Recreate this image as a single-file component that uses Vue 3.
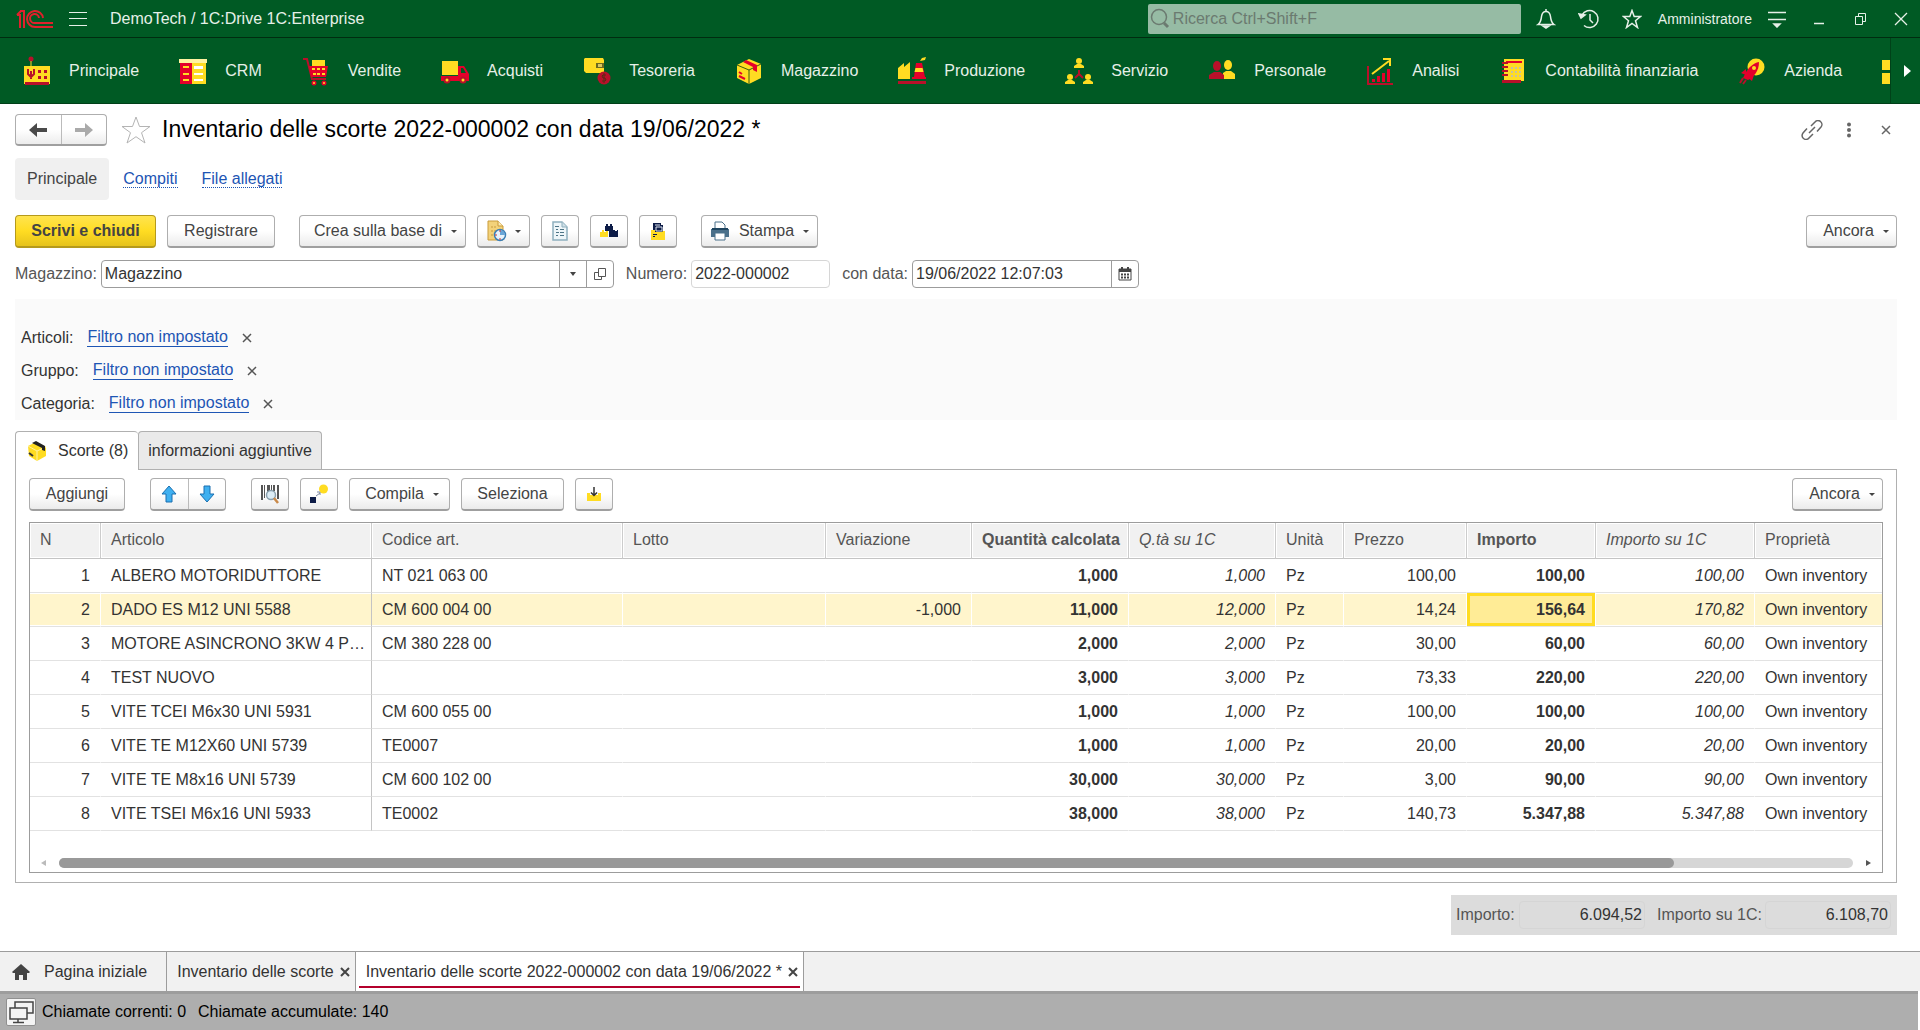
<script setup>
import { ref } from 'vue'

const Y = '#ffdc22'
const R = '#e4002b'
const D = '#b8102a'

const sections = [
  { label: 'Principale', icon: `<path d="M3 11h26v18H3z" fill="${Y}"/><path d="M4 27h24v3H4z" fill="${D}"/><circle cx="10" cy="4" r="2.500" fill="${D}"/><path d="M9.500 6h1v6h-1z" fill="${Y}"/><path d="M7 14v5l3 3 3-3v-5M10 16v8" stroke="${D}" stroke-width="2" fill="none"/><path d="M17 15h3v3h-3zM23 15h3v3h-3zM17 21h3v3h-3zM23 21h3v3h-3z" fill="${D}"/>` },
  { label: 'CRM', icon: `<path d="M2 4h28v4H2z" fill="#fff3a0"/><path d="M3 8h26v21H3z" fill="${Y}"/><path d="M3 8h12v21H3z" fill="${R}"/><path d="M6 11h6v2H6zM6 18h6v2H6zM6 24h6v2H6z" fill="${Y}"/><path d="M17 11h9v3h-9zM17 18h9v2h-9zM17 24h9v2h-9z" fill="#fff"/>` },
  { label: 'Vendite', icon: `<path d="M12 5h13v8H12z" fill="${Y}"/><path d="M3 4h4l5 20h14" stroke="${D}" stroke-width="2" fill="none"/><path d="M9 11h19l-2 11H11z" fill="${R}"/><path d="M12 13h3v2h-3zM17 13h3v2h-3zM22 13h3v2h-3zM13 18h3v2h-3zM17 18h3v2h-3zM22 18h3v2h-3z" fill="${Y}"/><circle cx="14" cy="28" r="2.500" fill="${R}"/><circle cx="24" cy="28" r="2.500" fill="${R}"/><circle cx="14" cy="28" r="1" fill="${Y}"/><circle cx="24" cy="28" r="1" fill="${Y}"/>` },
  { label: 'Acquisti', icon: `<path d="M3 6h16v14H3z" fill="${Y}"/><path d="M19 11h6l5 8v7H2v-5h17z" fill="${R}"/><path d="M22 13h2l3 5h-5z" fill="#005a24"/><circle cx="8" cy="25" r="3.500" fill="${D}"/><circle cx="24" cy="25" r="3.500" fill="${D}"/><circle cx="8" cy="25" r="1.500" fill="${Y}"/><circle cx="24" cy="25" r="1.500" fill="${Y}"/>` },
  { label: 'Tesoreria', icon: `<path d="M4 3h18l1 2v13H5l-2-2V4z" fill="${Y}"/><path d="M15 8h8v5h-8z" fill="#6b6a20"/><path d="M17 9h4v3h-4z" fill="#d8c860"/><circle cx="23" cy="23" r="6.500" fill="${D}"/><path d="M25 20h-3l-1 1 1 2h2l1 2-1 1h-3M23 18v10" stroke="#5a2a14" fill="none"/>` },
  { label: 'Magazzino', icon: `<path d="m4 10 12-6 12 5v14l-12 6-12-6z" fill="${Y}"/><path d="m4 10 12 5 12-6M16 15v14" stroke="#3b5a10" fill="none"/><path d="m10 7 3-2 11 5v7l-4-2v-3z" fill="${R}"/><path d="m6 17 3 2M6 21l6 3" stroke="${R}" stroke-width="2"/>` },
  { label: 'Produzione', icon: `<path d="M2 24V13l6-5v4l6-5v17z" fill="${Y}"/><path d="M2 26h28v3H2z" fill="${D}"/><path d="M20 8h6l3 14h1v2H16v-2h2z" fill="${R}"/><path d="M19.500 13h7l1 4h-9z" fill="${Y}"/><path d="m24 6 2-3 4-1-1 3z" fill="${Y}"/>` },
  { label: 'Servizio', icon: `<g fill="${Y}"><circle cx="16" cy="6" r="3"/><path d="M11 13v-2l3-2h4l3 2v2z"/><circle cx="7" cy="22" r="3"/><path d="M2 29v-2l3-2h4l3 2v2z"/><circle cx="25" cy="22" r="3"/><path d="M20 29v-2l3-2h4l3 2v2z"/></g><path d="M16 15v4l-4 4M16 19l4 4" stroke="${D}" stroke-width="2" fill="none"/>` },
  { label: 'Personale', icon: `<ellipse cx="22" cy="10" rx="4" ry="5" fill="${Y}"/><path d="M17 24v-6l3-2h5l4 3v5z" fill="${Y}"/><ellipse cx="11" cy="11" rx="4" ry="5" fill="${D}"/><path d="M3 24v-4l5-3h6l4 3v4z" fill="${D}"/>` },
  { label: 'Analisi', icon: `<path d="M4 11v18h25" stroke="${D}" stroke-width="2" fill="none"/><path d="M8 24h3v3H8zM13 21h3v6h-3zM18 18h3v9h-3zM23 14h3v13h-3z" fill="${R}"/><path d="M8 19 25 6M19 4h7v7" stroke="${Y}" stroke-width="2" fill="none"/>` },
  { label: 'Contabilità finanziaria', icon: `<path d="M7 4h20v22H7z" fill="${Y}"/><path d="M9 6h16v2H9z" fill="${R}"/><path d="M5 7h6v2H5zM5 11h6v2H5zM5 15h6v2H5zM5 19h6v2H5zM5 25h19v3H5z" fill="${D}"/><path d="M14 13h10M14 17h10M14 21h10" stroke="#c8c0a0" stroke-width="2" stroke-dasharray="2 2"/>` },
  { label: 'Azienda', icon: `<circle cx="20" cy="12" r="8.500" fill="${Y}"/><path d="M23 7c-6 1-11 6-14 12l-2 4 5 2c6-3 11-9 11-18z" fill="${R}"/><path d="m10 14-5 4 5 2zM18 20l-2 6-4-3z" fill="${R}"/><circle cx="18" cy="13" r="2" fill="${Y}"/><path d="m7 23-3 5M10 25l-3 4" stroke="${D}" stroke-width="2"/>` },
]

const warehouse = ref('Magazzino')
const number = ref('2022-000002')
const date = ref('19/06/2022 12:07:03')
const total = ref('6.094,52')
const total1c = ref('6.108,70')
const filters = ['Articoli:', 'Gruppo:', 'Categoria:']

const columns = [
  { key: 'n', title: 'N', cls: 'num' },
  { key: 'item', title: 'Articolo', cls: 'frozen' },
  { key: 'code', title: 'Codice art.', cls: '' },
  { key: 'lot', title: 'Lotto', cls: '' },
  { key: 'diff', title: 'Variazione', cls: 'num' },
  { key: 'qty', title: 'Quantità calcolata', cls: 'num strong' },
  { key: 'qty1c', title: 'Q.tà su 1C', cls: 'num slanted' },
  { key: 'unit', title: 'Unità', cls: '' },
  { key: 'price', title: 'Prezzo', cls: 'num' },
  { key: 'sum', title: 'Importo', cls: 'num strong' },
  { key: 'sum1c', title: 'Importo su 1C', cls: 'num slanted' },
  { key: 'owner', title: 'Proprietà', cls: '' },
]
const make = (n, item, code, diff, qty, qty1c, price, sum, sum1c) =>
  ({ n, item, code, lot: '', diff, qty, qty1c, unit: 'Pz', price, sum, sum1c, owner: 'Own inventory' })
const rows = [
  make(1, 'ALBERO MOTORIDUTTORE', 'NT 021 063 00', '', '1,000', '1,000', '100,00', '100,00', '100,00'),
  make(2, 'DADO ES M12 UNI 5588', 'CM 600 004 00', '-1,000', '11,000', '12,000', '14,24', '156,64', '170,82'),
  make(3, 'MOTORE ASINCRONO 3KW 4 P…', 'CM 380 228 00', '', '2,000', '2,000', '30,00', '60,00', '60,00'),
  make(4, 'TEST NUOVO', '', '', '3,000', '3,000', '73,33', '220,00', '220,00'),
  make(5, 'VITE TCEI M6x30 UNI 5931', 'CM 600 055 00', '', '1,000', '1,000', '100,00', '100,00', '100,00'),
  make(6, 'VITE TE M12X60 UNI 5739', 'TE0007', '', '1,000', '1,000', '20,00', '20,00', '20,00'),
  make(7, 'VITE TE M8x16 UNI 5739', 'CM 600 102 00', '', '30,000', '30,000', '3,00', '90,00', '90,00'),
  make(8, 'VITE TSEI M6x16 UNI 5933', 'TE0002', '', '38,000', '38,000', '140,73', '5.347,88', '5.347,88'),
]
const selected = 2
</script>

<template>
  <div class="app">
    <header class="titlebar">
      <svg class="logo" width="38" height="20" viewBox="0 0 38 20" fill="none" stroke="#e0202c" stroke-width="2">
        <path d="M1 6h3v13M4 2h4v17M1 6l4-4" />
        <path d="M27 9a8 8 0 1 0-8 9h18M23 9a4.500 4.500 0 1 0-4 5h18" />
      </svg>
      <button class="bare menu" aria-label="Menu">
        <svg width="18" height="16" viewBox="0 0 18 16" stroke="#e6f0e8" stroke-width="1"><path d="M0 1.500h18M0 7.500h18M0 14.500h18" /></svg>
      </button>
      <span class="product">DemoTech / 1C:Drive 1C:Enterprise</span>
      <div class="search">
        <svg width="22" height="22" viewBox="0 0 22 22" fill="none" stroke="#6b7a70" stroke-width="2"><circle cx="10" cy="9" r="7.500" stroke-width="1.500" /><path d="m15 15 4 4" stroke-width="3" /></svg>
        <input type="text" placeholder="Ricerca Ctrl+Shift+F" aria-label="Ricerca" />
      </div>
      <div class="tools">
        <button class="bare" aria-label="Notifiche">
          <svg width="20" height="20" viewBox="0 0 20 20" fill="none" stroke="#e6f0e8" stroke-width="1.500"><path d="M2 15.500h16c-3-2-3-4-3.500-8C14 4 12 2.500 10 2.500S6 4 5.500 7.500C5 11.500 5 13.500 2 15.500z" /><path d="M10 0v3" /><path d="M7 17h6l-3 2z" fill="#e6f0e8" /></svg>
        </button>
        <button class="bare" aria-label="Cronologia">
          <svg width="22" height="20" viewBox="0 0 22 20" fill="none" stroke="#e6f0e8" stroke-width="1.500"><path d="M4 6a8.500 8.500 0 1 1 2 10.500M12 5v6l3 3" /><path d="m1 5 2 4 4-3z" fill="#e6f0e8" /></svg>
        </button>
        <button class="bare" aria-label="Preferiti">
          <svg width="20" height="20" viewBox="0 0 20 20" fill="none" stroke="#e6f0e8" stroke-width="1.500"><path d="m10 1.500 2.200 6H18.500l-5 4.200 2 6.800-5.500-4-5.500 4 2-6.800-5-4.200h6.300z" /></svg>
        </button>
        <span class="user">Amministratore</span>
        <button class="bare" aria-label="Opzioni">
          <svg width="18" height="18" viewBox="0 0 18 18" stroke="#e6f0e8" stroke-width="1.500"><path d="M0 2.500h18M0 9.500h18" /><path d="M6 14h6l-3 3z" fill="#e6f0e8" /></svg>
        </button>
        <div class="frame">
          <button class="bare" aria-label="Riduci"><svg width="12" height="12" viewBox="0 0 12 12" stroke="#e6f0e8" stroke-width="1.500"><path d="M1 10.500h10" /></svg></button>
          <button class="bare" aria-label="Ripristina"><svg width="12" height="12" viewBox="0 0 12 12" fill="none" stroke="#e6f0e8"><path d="M1.500 3.500h7v8h-7zM4.500 3.500v-3h7v8h-3" /></svg></button>
          <button class="bare" aria-label="Chiudi"><svg width="14" height="14" viewBox="0 0 14 14" stroke="#e6f0e8" stroke-width="1.300"><path d="m1 1 12 12M13 1 1 13" /></svg></button>
        </div>
      </div>
    </header>

    <nav class="sections">
      <div class="strip">
        <a v-for="s in sections" :key="s.label" href="#" class="section">
          <svg width="32" height="32" viewBox="0 0 32 32" v-html="s.icon" />
          <span>{{ s.label }}</span>
        </a>
        <a href="#" class="section more" aria-label="Altro">
          <svg width="16" height="32" viewBox="0 0 16 32"><path d="M2 5h14v10H2zM2 18h14v11H2z" fill="#ffdc22" /></svg>
        </a>
      </div>
      <button class="bare scroller" aria-label="Avanti"><svg width="8" height="12" viewBox="0 0 8 12"><path d="M1 0v12l7-6z" fill="#fff" /></svg></button>
    </nav>

    <main class="page">
      <div class="heading">
        <div class="pair history">
          <button aria-label="Indietro"><svg width="18" height="14" viewBox="0 0 18 14"><path d="M8 0v5h10v4H8v5L0 7z" fill="#4a4a4a" /></svg></button>
          <button aria-label="Inoltra"><svg width="18" height="14" viewBox="0 0 18 14"><path d="M10 0v5H0v4h10v5l8-7z" fill="#aaa" /></svg></button>
        </div>
        <svg class="star" width="30" height="28" viewBox="0 0 30 28" fill="none" stroke="#b4b4b4"><path d="m15 1 3.500 9.500H29l-8.500 6.200L24 27l-9-6.300L6 27l3.500-10.300L1 10.500h10.500z" /></svg>
        <h1>Inventario delle scorte 2022-000002 con data 19/06/2022 *</h1>
        <div class="page-tools">
          <button class="bare" aria-label="Collegamento"><svg width="22" height="20" viewBox="0 0 22 20" fill="none" stroke="#666" stroke-width="1.500"><path d="m8 13 6-6M10 6l4-4a3.800 3.800 0 0 1 6 5l-4 4.500M12 14l-4 4a3.800 3.800 0 0 1-6-5l4-4.500" /></svg></button>
          <button class="bare" aria-label="Altro"><svg width="6" height="16" viewBox="0 0 6 16" fill="#666"><circle cx="3" cy="2.500" r="2" /><circle cx="3" cy="8" r="2" /><circle cx="3" cy="13.500" r="2" /></svg></button>
          <button class="bare close" aria-label="Chiudi"><svg width="10" height="10" viewBox="0 0 10 10" stroke="#666" stroke-width="1.500"><path d="m1 1 8 8M9 1 1 9" /></svg></button>
        </div>
      </div>

      <nav class="subnav">
        <a href="#" class="current">Principale</a>
        <a href="#"><span>Compiti</span></a>
        <a href="#"><span>File allegati</span></a>
      </nav>

      <div class="toolbar">
        <button class="btn primary">Scrivi e chiudi</button>
        <button class="btn save">Registrare</button>
        <button class="btn create">Crea sulla base di <i class="caret" /></button>
        <button class="btn sheet" aria-label="Rapporti">
          <svg width="22" height="22" viewBox="0 0 22 22"><path d="M2 1h10l5 5v14H2z" fill="#f3d27a" stroke="#c99b3a" /><path d="M12 1v5h5" fill="#fbe9b5" stroke="#c99b3a" /><path d="M5 7h5M5 11h6M5 15h4" stroke="#c99b3a" stroke-dasharray="2 1" /><circle cx="14" cy="15" r="5.500" fill="#e8f3fb" stroke="#3d7fb5" stroke-width="1.500" /><path d="M14 15v-5a5 5 0 0 1 5 5z" fill="#6aa6d8" /><path d="M14 10v2M9 15h2M14 18v2" stroke="#c33" /></svg>
          <i class="caret" />
        </button>
        <button class="btn square" aria-label="Documento"><svg width="18" height="20" viewBox="0 0 18 20"><path d="M2 1h9l5 5v13H2z" fill="#eef6f9" stroke="#8fb0be" stroke-width="1.500" /><path d="M11 1v5h5" fill="#cfe0e8" stroke="#8fb0be" /><path d="M4 5.500h4M5 8.500h2M9 8.500h4M5 11.500h3M9 11.500h4M5 14.500h2M9 14.500h4" stroke="#4d7486" stroke-width="1" /></svg></button>
        <button class="btn square" aria-label="Moduli"><svg width="20" height="14" viewBox="0 0 20 14"><path d="M1 8h2V6h2v2h2V6h2v7H1z" fill="#ffdc22" /><path d="M6 2h1V0h2v2h2V0h2v2h1v4h2v1h2V6h1v7H10V7H6z" fill="#0d1c47" /></svg></button>
        <button class="btn square" aria-label="Archivio"><svg width="16" height="18" viewBox="0 0 16 18"><path d="M3 1h8v2h2v7H5V8H3z" fill="#0d1c47" /><path d="M5 3h5M6 5h6v4H6z" stroke="#dfe4f0" fill="none" /><path d="M1 8h4v2h7l1-1h2v9H1z" fill="#ffdc22" /><path d="M3 12.500h4M3 14.500h2" stroke="#0d1c47" /></svg></button>
        <button class="btn print">
          <svg width="20" height="20" viewBox="0 0 20 20"><path d="M5 8V1h7l3 3v4" fill="#fff" stroke="#4b708a" /><path d="M1 8h18v8H1z" fill="#4b708a" /><path d="M2 7h16v2H2z" fill="#1f4560" /><path d="M5 12h10v7H5z" fill="#fff" stroke="#4b708a" /></svg>
          Stampa <i class="caret" />
        </button>
        <button class="btn extra">Ancora <i class="caret" /></button>
      </div>

      <div class="fields">
        <label for="warehouse">Magazzino:</label>
        <div class="field wh">
          <input id="warehouse" v-model="warehouse" type="text" />
          <button aria-label="Elenco"><i class="caret" /></button>
          <button aria-label="Apri"><svg width="14" height="14" viewBox="0 0 14 14" fill="none" stroke="#555"><path d="M5.500 1.500h7v8h-7zM5.500 5.500h-4v7h7v-3" /></svg></button>
        </div>
        <label for="number" class="gap">Numero:</label>
        <div class="field nr"><input id="number" v-model="number" type="text" /></div>
        <label for="date" class="gap">con data:</label>
        <div class="field dt">
          <input id="date" v-model="date" type="text" />
          <button aria-label="Calendario"><svg width="14" height="14" viewBox="0 0 14 14"><path d="M1 2h12v11H1z" fill="none" stroke="#444" /><path d="M1 2h12v3H1zM3 0h2v3H3zM9 0h2v3H9z" fill="#444" /><path d="M3 7.500h8M3 10.500h8" stroke="#444" stroke-width="2" stroke-dasharray="2 1" /></svg></button>
        </div>
      </div>

      <section class="filters">
        <div v-for="f in filters" :key="f" class="filter">
          <span>{{ f }}</span>
          <a href="#">Filtro non impostato</a>
          <button class="bare" aria-label="Rimuovi filtro"><svg width="10" height="10" viewBox="0 0 10 10" stroke="#555" stroke-width="1.500"><path d="m1 1 8 8M9 1 1 9" /></svg></button>
        </div>
      </section>

      <div class="tabs">
        <button class="tab on">
          <svg width="22" height="22" viewBox="0 0 22 22"><path d="m2 6 8-4 10 5v9l-9 5-8-5z" fill="#ffdc22" /><path d="m2 6 9 5 9-4M11 11v10" stroke="#fff2a0" fill="none" /><path d="m6 3 4-2 9 5v5l-3-1V8z" fill="#222" /><path d="m3 13 4 3" stroke="#333" stroke-width="2" /></svg>
          Scorte (8)
        </button>
        <button class="tab">informazioni aggiuntive</button>
      </div>

      <section class="panel">
        <div class="toolbar inner">
          <button class="btn add">Aggiungi</button>
          <div class="pair arrows">
            <button aria-label="Su"><svg width="16" height="18" viewBox="0 0 16 18"><path d="m8 1 7 8h-4v8H5V9H1z" fill="#3fb0f0" stroke="#1a6fb0" /></svg></button>
            <button aria-label="Giù"><svg width="16" height="18" viewBox="0 0 16 18"><path d="m8 17 7-8h-4V1H5v8H1z" fill="#3fb0f0" stroke="#1a6fb0" /></svg></button>
          </div>
          <button class="btn square scan" aria-label="Codice a barre"><svg width="20" height="20" viewBox="0 0 20 20"><path d="M1 1h2v15H1zM4 1h1v13H4zM7 1h3v9H7zM11 1h1v5h-1zM13 1h2v6h-2zM17 1h2v14h-2z" fill="#555" /><circle cx="11" cy="11" r="4.500" fill="#dcecf5" stroke="#8aa0ae" stroke-width="1.500" /><path d="m14 14 4 5" stroke="#c98a4a" stroke-width="2.500" /></svg></button>
          <button class="btn square" aria-label="Trasferisci"><svg width="20" height="20" viewBox="0 0 20 20"><circle cx="14.500" cy="5" r="4.500" fill="#ffdc22" /><path d="M1 13h6v6H1z" fill="#0d1c47" /><path d="m7 12 4-3M8 8h3v3" stroke="#7a86a0" fill="none" /></svg></button>
          <button class="btn fill">Compila <i class="caret" /></button>
          <button class="btn pick">Seleziona</button>
          <button class="btn square" aria-label="Carica"><svg width="16" height="14" viewBox="0 0 16 14"><path d="M1 6h3v2h8V6h3v8H1z" fill="#ffdc22" /><path d="M8 0v8M5 5.500 8 8.500l3-3" stroke="#333" stroke-width="1.500" fill="none" /></svg></button>
          <button class="btn extra">Ancora <i class="caret" /></button>
        </div>

        <div class="grid">
          <table>
            <colgroup><col v-for="c in columns" :key="c.key" :class="'c-' + c.key" /></colgroup>
            <thead>
              <tr><th v-for="c in columns" :key="c.key" :class="c.cls">{{ c.title }}</th></tr>
            </thead>
            <tbody>
              <tr v-for="r in rows" :key="r.n" :class="{ sel: r.n === selected }">
                <td v-for="c in columns" :key="c.key" :class="[c.cls, { cur: r.n === selected && c.key === 'sum' }]">{{ r[c.key] }}</td>
              </tr>
            </tbody>
          </table>
          <div class="scroll">
            <svg width="6" height="6" viewBox="0 0 6 6"><path d="M5 0v6L0 3z" fill="#bbb" /></svg>
            <div class="track"><div class="thumb" /></div>
            <svg width="6" height="6" viewBox="0 0 6 6"><path d="M1 0v6l5-3z" fill="#555" /></svg>
          </div>
        </div>
      </section>

      <div class="totals">
        <label for="total">Importo:</label>
        <input id="total" v-model="total" type="text" readonly />
        <label for="total1c">Importo su 1C:</label>
        <input id="total1c" v-model="total1c" type="text" readonly />
      </div>
    </main>

    <footer>
      <div class="windows">
        <button class="wtab home">
          <svg width="18" height="16" viewBox="0 0 18 16"><path d="M9 0 0 8l1 1h2v7h4v-5h4v5h4V9h2l1-1z" fill="#444" /></svg>
          Pagina iniziale
        </button>
        <button class="wtab">Inventario delle scorte
          <svg width="10" height="10" viewBox="0 0 10 10" stroke="#444" stroke-width="2"><path d="m1 1 8 8M9 1 1 9" /></svg>
        </button>
        <button class="wtab on">Inventario delle scorte 2022-000002 con data 19/06/2022 *
          <svg width="10" height="10" viewBox="0 0 10 10" stroke="#444" stroke-width="2"><path d="m1 1 8 8M9 1 1 9" /></svg>
        </button>
      </div>
      <div class="status">
        <button class="mon" aria-label="Prestazioni"><svg width="26" height="24" viewBox="0 0 26 24" fill="#f4f4f4" stroke="#444" stroke-width="1.500"><path d="M7 2h18v11H7z" /><path d="M2 8h17v11H2zM10 19v3M5 22.500h11" /></svg></button>
        <span>Chiamate correnti: 0</span>
        <span>Chiamate accumulate: 140</span>
      </div>
    </footer>
  </div>
</template>

<style>
body { background: #fff; }
</style>

<style scoped>
.app, .app * { box-sizing: border-box; }
.app {
  display: flex;
  flex-direction: column;
  min-height: 100vh;
  font-family: "Liberation Sans", Arial, sans-serif;
  font-size: 16px;
  color: #333;
}
button, input { font: inherit; color: inherit; margin: 0; padding: 0; }
svg { flex: none; display: block; }
.bare { background: none; border: 0; display: flex; align-items: center; justify-content: center; }

.titlebar {
  display: flex;
  align-items: center;
  height: 38px;
  padding: 0 10px 0 16px;
  background: #005a24;
  border-bottom: 1px solid #002c10;
  color: #e6f0e8;
}
.menu { margin-left: 15px; }
.product { margin-left: 23px; }
.search {
  display: flex;
  align-items: center;
  width: 373px;
  height: 30px;
  margin-left: auto;
  padding-left: 1px;
  background: #96bba4;
  border-radius: 2px;
}
.search input { flex: 1; min-width: 0; margin-left: 2px; border: 0; background: none; outline: 0; }
.search input::placeholder { color: #6b7a70; opacity: 1; }
.tools { display: flex; align-items: center; gap: 22px; margin-left: 15px; }
.user { font-size: 14px; margin: 0 -6px; }
.frame { display: flex; gap: 23px; margin-left: 2px; }
.frame .bare { width: 18px; }

.sections {
  display: flex;
  height: 66px;
  background: #005a24;
  border-bottom: 1px solid #003f18;
  color: #e6f0e8;
}
.strip { display: flex; flex: 1; min-width: 0; overflow: hidden; padding-left: 21px; border-right: 1px solid #004219; }
.section { display: flex; flex: none; align-items: center; gap: 16px; margin-right: 38px; color: inherit; text-decoration: none; }
.section.more { margin: 0; }
.scroller { width: 29px; padding-left: 2px; }

.page { flex: 1; padding: 10px 23px 16px 15px; }
.heading { display: flex; align-items: center; height: 32px; }
.pair { display: flex; height: 32px; border: 1px solid #aeaeae; border-bottom: 2px solid #9f9f9f; border-radius: 4px; background: linear-gradient(#fff 50%, #ececec); }
.pair button { flex: 1; display: flex; align-items: center; justify-content: center; border: 0; background: none; }
.pair button + button { border-left: 1px solid #bbb; }
.history { width: 92px; }
.star { margin-left: 14px; }
h1 { margin: 0 0 2px 11px; font-size: 23px; line-height: 28px; font-weight: 400; color: #000; white-space: nowrap; }
.page-tools { display: flex; align-items: center; gap: 23px; margin-left: auto; }
.close { width: 22px; }

.subnav { display: flex; height: 42px; margin-top: 12px; line-height: 42px; }
.subnav a { margin-right: 24px; color: #1d55b4; text-decoration: none; }
.subnav a span { border-bottom: 1px dotted #1d55b4; }
.subnav a.current { margin-right: 14px; padding: 0 12px; border-radius: 4px; background: #f0f0f0; color: #444; }

.toolbar { display: flex; margin-top: 15px; gap: 11px; }
.btn {
  display: flex;
  align-items: center;
  justify-content: center;
  height: 33px;
  border: 1px solid #aeaeae;
  border-bottom: 2px solid #9f9f9f;
  border-radius: 4px;
  background: linear-gradient(#fff 50%, #ebebeb);
  color: #444;
  white-space: nowrap;
}
.caret { flex: none; width: 0; height: 0; border: 3px solid transparent; border-top: 3px solid #444; border-bottom: 0; margin-left: 9px; }
.primary { width: 141px; border-color: #b59a1c; background: linear-gradient(#ffe44f, #ffdc22 50%, #e6c31c); font-weight: 700; }
.save { width: 108px; }
.create { width: 167px; margin-left: 13px; padding-left: 6px; }
.sheet { width: 53px; }
.sheet .caret { margin-left: 7px; }
.square { width: 38px; }
.print { width: 117px; margin-left: 13px; }
.print svg { margin-right: 9px; }
.extra { width: 91px; margin-left: auto; padding-left: 9px; }

.fields { display: flex; align-items: center; margin-top: 12px; height: 28px; color: #555; }
.fields label { margin-right: 4px; }
.fields .gap { margin-left: 12px; }
.field { display: flex; height: 28px; border: 1px solid #9c9c9c; border-radius: 4px; background: #fff; color: #333; }
.field input { flex: 1; min-width: 0; border: 0; padding: 0 3px; background: none; outline: 0; }
.field button { display: flex; align-items: center; justify-content: center; width: 27px; border: 0; border-left: 1px solid #9c9c9c; background: none; }
.field .caret { margin: 0; border-width: 4px 3px 0; }
.wh { width: 513px; }
.nr { width: 139px; border-color: #d6d6d6; }
.dt { width: 227px; }

.filters { margin-top: 11px; padding: 22px 6px 0; background: #fafafa; }
.filter { display: flex; align-items: center; height: 33px; color: #333; }
.filter a { margin: 0 14px 0 14px; line-height: 18px; color: #1d55b4; text-decoration: none; border-bottom: 1px solid #1d55b4; }

.tabs { display: flex; margin-top: 11px; height: 38px; }
.tab { display: flex; align-items: center; padding: 0 9px; border: 1px solid #b0b0b0; border-bottom: 0; border-radius: 4px 4px 0 0; background: #eaeaea; white-space: nowrap; }
.tab.on { gap: 10px; margin-bottom: -1px; padding: 0 10px; border-right: 0; background: #fff; position: relative; }
.panel { border: 1px solid #b0b0b0; padding: 8px 13px 9px; }
.inner { margin-top: 0; }
.add { width: 96px; }
.arrows { width: 76px; height: 33px; margin: 0 14px; }
.fill { width: 101px; padding-left: 5px; }
.pick { width: 103px; }

.grid { margin-top: 11px; border: 1px solid #9c9c9c; }
table { width: 100%; table-layout: fixed; border-collapse: separate; border-spacing: 0; }
.c-n { width: 71px; } .c-item { width: 271px; } .c-code { width: 251px; } .c-lot { width: 203px; }
.c-diff { width: 146px; } .c-qty { width: 157px; } .c-qty1c { width: 147px; } .c-unit { width: 68px; }
.c-price { width: 123px; } .c-sum { width: 129px; } .c-sum1c { width: 159px; }
th { height: 36px; padding: 0 10px 2px; border-right: 1px solid #ccc; border-bottom: 1px solid #c4c4c4; background: #f1f1f1; box-shadow: inset 0 0 0 1px #fff; color: #555; font-weight: 400; text-align: left; white-space: nowrap; }
th.strong { font-weight: 700; }
td { height: 34px; padding: 0 10px; border-bottom: 1px solid #e2e2e2; border-right: 1px solid #fff; white-space: nowrap; overflow: hidden; }
th:last-child, td:last-child { border-right: 0; padding-right: 0; }
td.num { text-align: right; }
td.frozen { border-right-color: #c4c4c4; }
.strong { font-weight: 700; }
.slanted { font-style: italic; }
.sel td { background: #fff5cc; box-shadow: inset 0 1px #fff, inset 0 -1px #fff; }
.sel td.cur { background: #ffec96; box-shadow: inset 0 0 0 3px #ffdc22; }
.scroll { display: flex; align-items: center; height: 41px; padding: 27px 11px 4px; }
.track { flex: 1; height: 10px; margin: 0 12px; border-radius: 5px; background: #d6d6d6; }
.thumb { width: 90%; height: 10px; border-radius: 5px; background: #999; }

.totals { display: flex; align-items: center; width: 446px; height: 40px; margin: 12px 0 0 auto; padding: 0 6px 0 5px; background: #dcdcdc; color: #555; }
.totals input { width: 126px; height: 28px; padding-right: 2px; border: 1px solid #d5d5d5; border-radius: 4px; background: none; text-align: right; color: #333; }
.totals label { width: 63px; white-space: nowrap; }
.totals input + label { width: auto; flex: 1; padding-left: 12px; }

.windows { display: flex; height: 40px; border-top: 1px solid #9c9c9c; background: #f1f1f1; }
.wtab { display: flex; align-items: center; gap: 6px; padding: 0 5px 0 10px; border: 0; border-right: 1px solid #9c9c9c; background: none; white-space: nowrap; }
.home { gap: 14px; padding: 0 19px 0 12px; }
.wtab.on { position: relative; background: #fff; }
.wtab.on::after { content: ""; position: absolute; left: 3px; right: 3px; bottom: 3px; height: 2px; background: #b4002c; }
.status { display: flex; align-items: center; gap: 12px; height: 40px; margin-right: 2px; padding: 0 0 2px 6px; border-top: 3px solid #9d9d9d; background: #aeaeae; color: #000; }
.mon { display: flex; align-items: center; justify-content: center; width: 30px; height: 28px; margin-right: -6px; border: 1px solid #909090; border-radius: 2px; background: #f4f4f4; }
</style>
